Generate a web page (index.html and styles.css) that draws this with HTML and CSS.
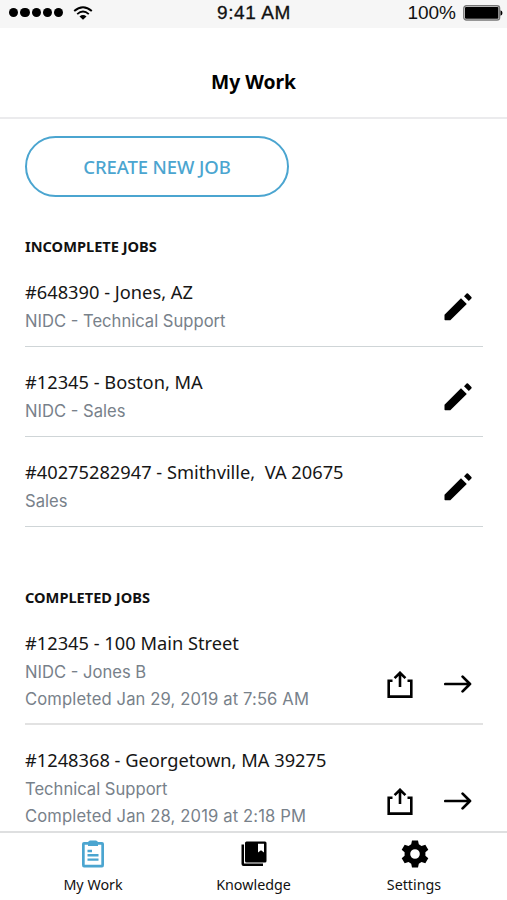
FILE: index.html
```html
<!DOCTYPE html>
<html lang="en">
<head>
<meta charset="utf-8">
<title>My Work</title>
<link rel="stylesheet" href="styles.css">
</head>
<body>
<svg class="sprite" aria-hidden="true">
  <symbol id="pencil" viewBox="0 0 28 28"><path d="M.5 21.700 17 5.200 22.800 11 6.300 27.300H1.200Q.500 27.300.500 26.600zM20 3.200 22.600.600Q23.300 0 24 .600L27.400 4Q28 4.700 27.400 5.400L24.800 8z"/></symbol>
  <symbol id="share" viewBox="0 0 26 28"><path d="M5.500 9.800H1.700V25.600H24.300V9.800H20.500M13 16V2.500M7.600 7.200 13 1.800 18.400 7.200" fill="none" stroke="currentColor" stroke-width="2.600"/></symbol>
  <symbol id="arrow" viewBox="0 0 28 18"><path d="M1.300 9H26M18.600 1.600 26 9 18.600 16.400" fill="none" stroke="currentColor" stroke-width="2.700" stroke-linecap="round" stroke-linejoin="round"/></symbol>
</svg>
<div class="screen">
  <div class="status">
    <div class="signal">
      <i></i><i></i><i></i><i></i><i></i>
      <svg class="wifi" viewBox="0 0 20 14"><path d="M1.200 5Q10-2.600 18.800 5M4.200 8.100Q10 3.100 15.800 8.100" fill="none" stroke="#000" stroke-width="1.900"/><path d="M6.500 10.400Q10 7.800 13.500 10.400L10 13.800z"/></svg>
    </div>
    <div class="clock">9:41 AM</div>
    <div class="power"><span>100%</span><svg class="battery" viewBox="0 0 40 16"><rect x=".8" y=".8" width="35.8" height="14.2" rx="2.6" fill="none" stroke="#777" stroke-width="1.4"/><rect x="2" y="2" width="33.4" height="11.8" rx="1"/><path d="M37.500 5.200Q39.500 6 39.500 8T37.500 10.800z"/></svg></div>
  </div>
  <header class="header"><h1>My Work</h1></header>
  <main class="content">
    <button class="create">CREATE NEW JOB</button>
    <section class="incomplete">
      <h2>INCOMPLETE JOBS</h2>
      <article class="job"><div><h3>#648390 - Jones, AZ</h3><p>NIDC - Technical Support</p></div><svg class="pencil"><use href="#pencil"/></svg></article>
      <article class="job"><div><h3>#12345 - Boston, MA</h3><p>NIDC - Sales</p></div><svg class="pencil"><use href="#pencil"/></svg></article>
      <article class="job"><div><h3>#40275282947 - Smithville,&nbsp; VA 20675</h3><p>Sales</p></div><svg class="pencil"><use href="#pencil"/></svg></article>
    </section>
    <section class="completed">
      <h2>COMPLETED JOBS</h2>
      <article class="job done"><div><h3>#12345 - 100 Main Street</h3><p>NIDC - Jones B</p><p class="date">Completed Jan 29, 2019 at 7:56 AM</p></div><div class="actions"><svg class="share"><use href="#share"/></svg><svg class="arrow"><use href="#arrow"/></svg></div></article>
      <article class="job done"><div><h3>#1248368 - Georgetown, MA 39275</h3><p>Technical Support</p><p class="date">Completed Jan 28, 2019 at 2:18 PM</p></div><div class="actions"><svg class="share"><use href="#share"/></svg><svg class="arrow"><use href="#arrow"/></svg></div></article>
    </section>
  </main>
  <nav class="tabs">
    <a class="tab"><svg viewBox="0 0 28 28"><path class="blue" fill-rule="evenodd" d="M5 2H9Q10 .5 11 .5H17Q18 .5 19 2H23Q25 2 25 4V25Q25 27.500 23 27.500H5Q3 27.500 3 25V4Q3 2 5 2zM5.700 4.700V24.700H22.300V4.700H19V6H9V4.700z"/><path class="blue" d="M8.500 9.800H13V12.200H8.500zM8.500 14H19.500V16.400H8.500zM8.500 18.400H19.500V20.800H8.500z"/></svg><span>My Work</span></a>
    <a class="tab"><svg viewBox="0 0 28 28"><path d="M1.500 4.500H4V23.500H23V26H3.500Q1.500 26 1.500 24z"/><path fill-rule="evenodd" d="M6.500 1.500H25Q26.500 1.500 26.500 3V21Q26.500 22.500 25 22.500H6.500Q5 22.500 5 21V3Q5 1.500 6.500 1.500zM18 3.700V12.500L21 10.300 24 12.500V3.700z"/></svg><span>Knowledge</span></a>
    <a class="tab settings"><svg viewBox="0 0 28 28"><path fill-rule="evenodd" d="M11 .5H17L17.800 4.300 20.500 5.900 24.300 4.700 27.300 9.700 24.400 12.300V15.700L27.300 18.300 24.300 23.300 20.500 22.100 17.800 23.700 17 27.500H11L10.200 23.700 7.500 22.100 3.700 23.300.7 18.300 3.600 15.700V12.300L.7 9.700 3.700 4.700 7.500 5.900 10.200 4.300zM14 9.200A4.800 4.800 0 1 0 14 18.800 4.800 4.800 0 1 0 14 9.200z"/></svg><span>Settings</span></a>
  </nav>
</div>
</body>
</html>
```
FILE: styles.css
```css
* { box-sizing: border-box; }
body { margin: 0; background: #fff; color: #111; font-family: "Noto Sans", sans-serif; }
h1, h2, h3, p { margin: 0; }
svg { display: block; fill: #000; color: #000; }
.sprite { display: none; }
.screen { width: 507px; height: 900px; display: flex; flex-direction: column; overflow: hidden; }
.status { height: 28px; flex: none; background: #f6f6f6; display: grid; grid-template-columns: 1fr auto 1fr; align-items: center; padding: 0 4px 3px 9px; font: 19px/24px "Liberation Sans", sans-serif; }
.signal { display: flex; align-items: center; gap: 2px; }
.signal i { width: 9.300px; height: 9.300px; border-radius: 50%; background: #000; }
.wifi { width: 20px; height: 14px; margin-left: 8px; }
.clock { -webkit-text-stroke: .3px #111; letter-spacing: .6px; margin-left: -4px; }
.power { display: flex; justify-content: flex-end; align-items: center; gap: 7px; }
.battery { width: 40px; height: 16px; }
.header { height: 91px; flex: none; border-bottom: 2px solid #ebebed; padding-top: 39px; text-align: center; }
h1 { font-size: 19.300px; line-height: 30px; font-weight: 700; color: #000; }
.content { flex: 1; min-height: 0; overflow: hidden; padding: 17px 24px 0 25px; }
.create { display: block; width: 264px; height: 61px; border: 2.500px solid #4ba5d0; border-radius: 31px; background: #fff; color: #4ba5d0; font: 500 18.500px "Noto Sans", sans-serif; letter-spacing: -.1px; padding: 0 0 1px; }
h2 { font-size: 14.600px; line-height: 20px; font-weight: 700; color: #111; }
.incomplete { padding-top: 39px; }
.completed { padding-top: 61px; }
h2 + .job { margin-top: 1px; }
.completed h2 { margin-top: -1px; }
.job { height: 90px; border-bottom: 1.500px solid #cfd5d7; display: flex; justify-content: space-between; align-items: flex-start; padding: 21px 11px 0 0; }
.job h3 { font-size: 18.250px; line-height: 28px; font-weight: 400; color: #161616; white-space: nowrap; margin-bottom: 1.500px; }
.job p { font: 16.600px/27px Inter, sans-serif; color: #78818a; white-space: nowrap; }
.job .date { letter-spacing: .13px; }
.pencil { width: 28px; height: 28px; margin-top: 15px; }
.done { height: 117px; border-bottom: 2px solid #e2e2e2; }
.actions { display: flex; align-items: center; gap: 31px; margin-top: 42px; }
.share { width: 26px; height: 28px; }
.arrow { width: 28px; height: 18px; margin-bottom: 2px; }
.tabs { height: 69px; flex: none; border-top: 2px solid #dedfe0; display: grid; grid-template-columns: 186px 135px 186px; background: #fff; }
.tab { display: flex; flex-direction: column; align-items: center; padding-top: 7px; }
.tab svg { width: 28px; height: 28px; }
.settings svg { margin-left: 2px; }
.tab span { font-size: 14.300px; line-height: 20px; margin-top: 7px; color: #111; }
.blue { fill: #4ba5d0; }
```
